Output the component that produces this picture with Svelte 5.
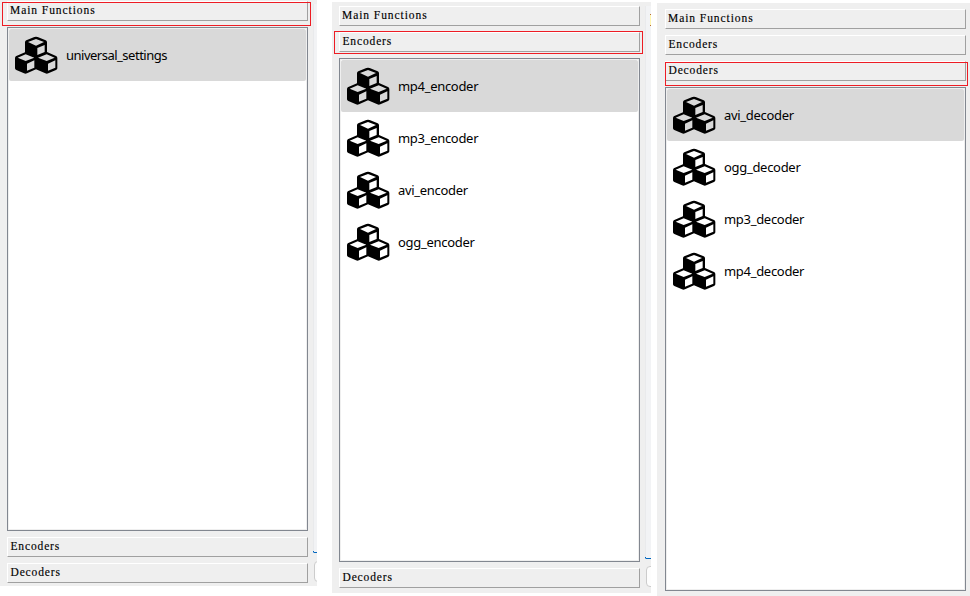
<script>
  const panels = [
    { cls: 'first', tabs: ['Main Functions', 'Encoders', 'Decoders'], active: 0, items: ['universal_settings'] },
    { cls: 'second', tabs: ['Main Functions', 'Encoders', 'Decoders'], active: 1, items: ['mp4_encoder', 'mp3_encoder', 'avi_encoder', 'ogg_encoder'] },
    { cls: 'third', tabs: ['Main Functions', 'Encoders', 'Decoders'], active: 2, items: ['avi_decoder', 'ogg_decoder', 'mp3_decoder', 'mp4_decoder'] }
  ];
</script>

<main>
  {#each panels as panel}
    <section class="panel {panel.cls}">
      {#each panel.tabs as tab, i}
        <div class="tab" class:wide={i === 0}>
          <span>{tab}</span>
        </div>
        {#if i === panel.active}
          <div class="list">
            {#each panel.items as item, j}
              <div class="row" class:selected={j === 0}>
                <svg width="43" height="38" viewBox="21 18 129 114" aria-hidden="true">
                  <path
                    fill-rule="evenodd"
                    d="M84 20L89 21L113 31Q117 33 117 37V66L144 78Q148 80 148 84V115Q148 118 144 120L121 130Q116 132 112 130L84 118L57 130Q52 132 48 130L25 120Q21 118 21 115V84Q21 80 25 78L51 67V37Q51 33 55 31L79 21ZM84 27L60 36L84 47L108 36ZM88 54V75L110 66V45ZM53 73L29 83L53 93L79 83ZM57 101V122L79 113V91ZM116 73L90 83L116 93L140 83ZM120 101V122L142 113V91Z"
                  />
                </svg>
                <span>{item}</span>
              </div>
            {/each}
          </div>
        {/if}
      {/each}
      {#if panel.cls !== 'third'}
        <div class="edge"><i class="field"></i><i class="button"></i></div>
      {/if}
      {#if panel.cls === 'second'}<i class="mark"></i>{/if}
      <div class="outline"></div>
    </section>
  {/each}
</main>

<style>
  :global(body) { background: #fff; }
  main { display: flex; align-items: flex-start; width: 970px; height: 596px; overflow: hidden; }
  .panel { position: relative; box-sizing: border-box; flex: none; display: flex; flex-direction: column; gap: 6px; background: #efefef; }
  .first { width: 317px; height: 586px; padding: 1px 9px 0 7px; }
  .second { width: 319px; height: 591px; margin: 2px 0 0 15px; padding: 4px 11px 0 7px; }
  .third { width: 313px; height: 593px; margin: 3px 0 0 6px; padding: 6px 4px 0 8px; }
  .tab {
    box-sizing: border-box; width: 301px; height: 20px; flex: none;
    border: 1px solid #fff; border-right-color: #a0a0a0; border-bottom-color: #a0a0a0;
    font: 11.5px/17px "Liberation Serif", serif; color: #000; padding-left: 2.5px;
    letter-spacing: 0.85px; -webkit-text-stroke: 0.15px #000; white-space: pre;
  }
  .wide { padding-left: 2px; letter-spacing: 0.93px; }
  .list {
    box-sizing: border-box; width: 301px; height: 504px; flex: none;
    border: 1px solid #828790; background: #fff; box-shadow: inset 0 0 0 1px #efefef; padding: 1px;
  }
  .row { display: flex; align-items: center; height: 52px; box-sizing: border-box; padding-left: 6px; }
  .row svg { flex: none; }
  .row span { margin-left: 8px; font: 13px/18px "Noto Sans", sans-serif; color: #000; white-space: nowrap; letter-spacing: -0.3px; padding-bottom: 1px; }
  .first .row span { letter-spacing: -0.5px; }
  .selected { background: #d9d9d9; border-radius: 2px; }
  .outline { position: absolute; box-sizing: border-box; border: 1px solid #ed1c24; pointer-events: none; }
  .first .outline { left: 2px; top: 2px; width: 309px; height: 24px; }
  .second .outline { left: 2px; top: 29px; width: 309px; height: 23px; }
  .third .outline { left: 8px; top: 59px; width: 303px; height: 24px; }
  .edge { position: absolute; right: 0; top: 4px; bottom: 0; width: 4px; overflow: hidden; }
  .second .edge { width: 6px; }
  .field { position: absolute; left: 0; top: 0; width: 12px; height: 549px; box-sizing: border-box; background: #f2f3f5; border-left: 1px solid #e9eaec; border-bottom: 1px solid #0067c0; }
  .second .field { height: 553px; }
  .field::after { content: ""; position: absolute; left: -1px; bottom: 0; width: 1px; height: 1px; background: #0067c0; }
  .button { position: absolute; left: 1px; top: 557px; box-sizing: border-box; width: 18px; height: 21px; border: 1px solid #ccc; border-radius: 4px; background: #fdfdfd; }
  .second .button { top: 560px; }
  .mark { position: absolute; right: 0; top: 12px; width: 1px; height: 12px; box-sizing: border-box; background: #fff6b0; border-top: 1px solid #b86d36; border-bottom: 1px solid #b86d36; }
</style>
